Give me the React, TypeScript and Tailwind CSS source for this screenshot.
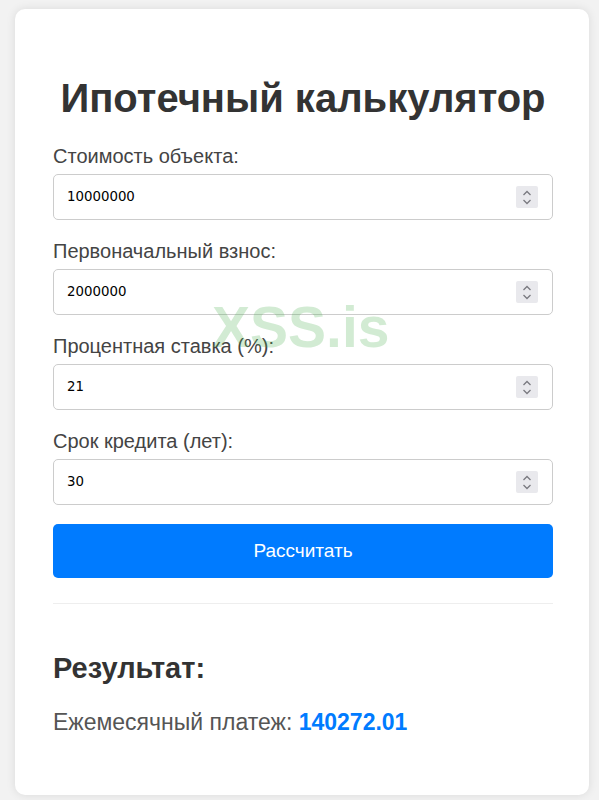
import React from "react";

const fields = [
  { label: "Стоимость объекта:", value: "10000000" },
  { label: "Первоначальный взнос:", value: "2000000" },
  { label: "Процентная ставка (%):", value: "21" },
  { label: "Срок кредита (лет):", value: "30" },
];

function Spinner() {
  return (
    <div className="flex h-[22px] w-[22px] flex-col items-center justify-center gap-[3px] rounded-[2px] bg-[#e9e9ed]">
      <svg width="10" height="6" viewBox="0 0 10 6" fill="none">
        <path d="M1.5 5 L5 1.5 L8.5 5" stroke="#7a7a80" strokeWidth="1.3" />
      </svg>
      <svg width="10" height="6" viewBox="0 0 10 6" fill="none">
        <path d="M1.5 1 L5 4.5 L8.5 1" stroke="#7a7a80" strokeWidth="1.3" />
      </svg>
    </div>
  );
}

function Field({ label, value }: { label: string; value: string }) {
  return (
    <div className="flex flex-col">
      <label className="text-[20px] leading-[23px] text-[#444]">{label}</label>
      <div className="mt-[6px] flex h-[46px] items-center justify-between rounded-[5px] border border-[#cccccc] bg-white pl-[13px] pr-[14px]">
        <span className="font-['DejaVu_Sans',sans-serif] text-[13.33px] text-black">{value}</span>
        <Spinner />
      </div>
    </div>
  );
}

export default function App() {
  return (
    <div className="min-h-screen bg-[#f2f2f2] pt-[9px] pb-[4px] font-['Liberation_Sans',Arial,sans-serif]">
      <div className="relative ml-[15px] w-[574px] rounded-[10px] bg-white pl-[38px] pr-[36px] pt-[66px] pb-[59px] shadow-[0_0_10px_rgba(0,0,0,0.1)]">
        <h1 className="text-center text-[40px] font-bold leading-[46px] text-[#333]">Ипотечный калькулятор</h1>

        <div className="mt-[24px] flex flex-col gap-[20px]">
          {fields.map((f) => (
            <Field key={f.label} label={f.label} value={f.value} />
          ))}
        </div>

        <button className="mt-[19px] h-[54px] w-full rounded-[5px] bg-[#007bff] text-[19px] text-white">
          Рассчитать
        </button>

        <div className="mt-[25px] h-px bg-[#eeeeee]" />

        <h2 className="mt-[48px] text-[29px] font-bold leading-[33px] text-[#333]">Результат:</h2>
        <p className="mt-[24px] text-[23px] leading-[27px] text-[#555]">
          Ежемесячный платеж: <span className="font-bold text-[#007bff]">140272.01</span>
        </p>

        {/* watermark */}
        <div className="pointer-events-none absolute left-[197px] top-[276px] text-[57px] font-bold text-[rgba(76,175,80,0.25)]">
          XSS.is
        </div>
      </div>
    </div>
  );
}
